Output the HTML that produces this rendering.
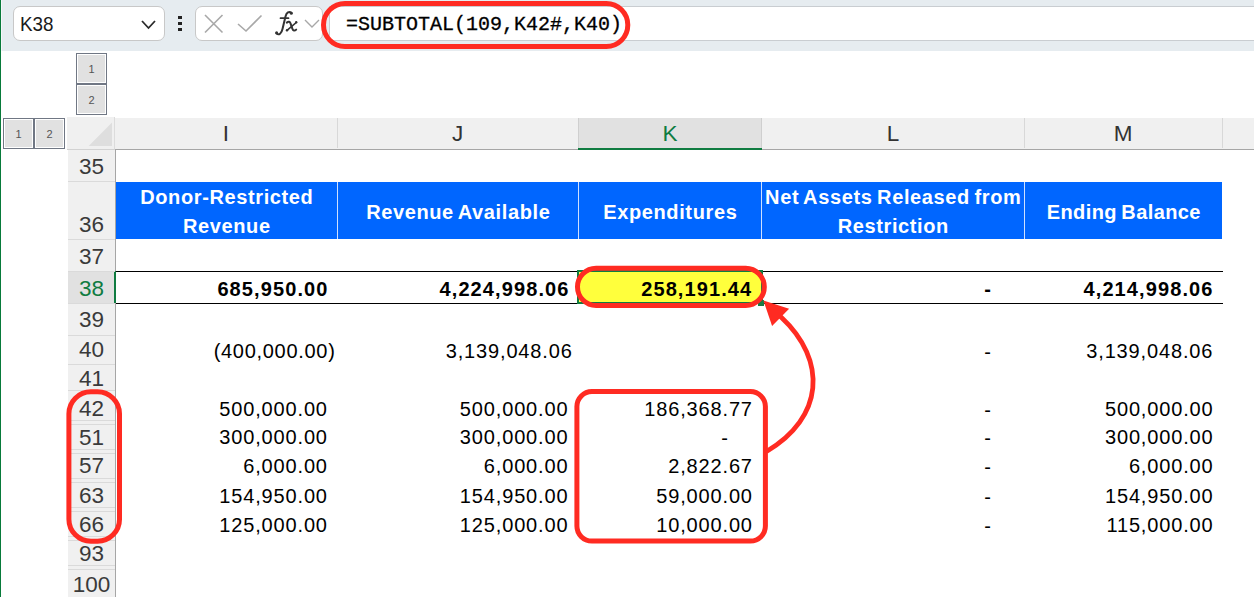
<!DOCTYPE html>
<html><head><meta charset="utf-8">
<style>
*{margin:0;padding:0;box-sizing:border-box}
html,body{width:1254px;height:597px;overflow:hidden;background:#fff;font-family:"Liberation Sans",sans-serif}
.a{position:absolute}
#top{left:0;top:0;width:1254px;height:51px;background:#E6ECF0}
.box{position:absolute;background:#fff;border:1px solid #C8C8C8;border-radius:7px}
.ob{position:absolute;width:31px;height:31px;border:1px solid #707784;background:#E1E1E1;box-shadow:inset 0 0 0 1px #fff;font-size:11px;color:#555;text-align:center;line-height:31px}
.hd{position:absolute;top:118px;height:32px;background:#F0F0F0;border-bottom:1px solid #A6A6A6;font-size:22.5px;color:#333;text-align:center;line-height:32px}
.rh{position:absolute;left:68px;width:47px;background:#F0F0F0;font-size:22px;color:#3B3B3B;text-align:center}
.t.rh{color:#3a3a3a}
.hl{position:absolute;left:68px;width:47px;height:1px;background:#DADADA}
.t{position:absolute;white-space:nowrap;font-size:20px;color:#000;line-height:20px}
.n{letter-spacing:0.85px;margin-right:-0.85px}
.nb{letter-spacing:1.1px;margin-right:-1.1px}
.b{font-weight:bold}
.w{color:#fff;font-weight:bold;letter-spacing:0.62px;word-spacing:-1.5px;text-indent:0.62px}
</style></head><body>
<div class="a" style="left:0;top:0;width:1px;height:597px;background:#087A3A;z-index:5"></div><div class="a" style="left:1px;top:0;width:1px;height:51px;background:#F6F7FA;z-index:5"></div>
<div id="top" class="a"></div>
<!-- name box -->
<div class="box" style="left:13px;top:6px;width:152px;height:35px"></div>
<div class="t" style="left:19.8px;top:14px;font-size:20px;color:#1a1a1a;transform:scaleX(0.94);transform-origin:0 0">K38</div>
<svg class="a" style="left:140px;top:18px" width="18" height="14"><polyline points="2,3 8.5,10 15,3" fill="none" stroke="#2a2a2a" stroke-width="1.8"/></svg>
<div class="a" style="left:178px;top:16px;width:4px;height:3px;background:#222"></div>
<div class="a" style="left:178px;top:22px;width:4px;height:3px;background:#222"></div>
<div class="a" style="left:178px;top:28px;width:4px;height:3px;background:#222"></div>
<!-- fx box -->
<div class="box" style="left:195px;top:6px;width:128px;height:35px"></div>
<svg class="a" style="left:200px;top:10px" width="125" height="30">
<path d="M5,5 L22.5,22.5 M22.5,5 L5,22.5" stroke="#A8A8A8" stroke-width="1.6" fill="none"/>
<path d="M38,14 L46,21 L61.5,5.5" stroke="#A8A8A8" stroke-width="1.6" fill="none"/>
<path d="M105,10 L112,17 L119,10" stroke="#A8A8A8" stroke-width="1.4" fill="none"/>
</svg>
<svg class="a" style="left:0;top:0" width="330" height="45">
<g fill="none" stroke="#333" stroke-linecap="round">
<path d="M276.5,33.5 C279,35.5 281.5,33.5 282.5,29 L285.5,16.5 C286.5,12.5 289,11 291.5,12.8" stroke-width="2"/>
<path d="M280.5,18.2 L288.5,18.2" stroke-width="1.7"/>
<path d="M286.8,22.6 C288.6,21.2 289.9,21.6 290.6,23.6 L292.4,28.8 C293,30.8 294.6,31.2 296.2,29.6" stroke-width="2"/>
<path d="M296.4,22.4 L287,30.4" stroke-width="1.5"/>
</g>
<circle cx="276.6" cy="32.8" r="1.5" fill="#333"/>
<circle cx="291.3" cy="13.3" r="1.5" fill="#333"/>
<circle cx="296.2" cy="22.3" r="1.2" fill="#333"/><circle cx="287" cy="30.3" r="1.2" fill="#333"/>
</svg>
<!-- formula box -->
<div class="a" style="left:329px;top:6px;width:940px;height:35px;background:#fff;border:1px solid #C9CDD1"></div>
<div class="t" style="left:346px;top:15.3px;font-family:'Liberation Mono',monospace;font-size:20px;color:#000;-webkit-text-stroke:0.3px #000">=SUBTOTAL(109,K42#,K40)</div>

<!-- outline buttons -->
<div class="ob" style="left:76px;top:53px">1</div>
<div class="ob" style="left:76px;top:84px">2</div>
<div class="ob" style="left:3px;top:118px">1</div>
<div class="ob" style="left:34px;top:118px">2</div>

<!-- column headers -->
<div class="a" style="left:67px;top:117px;width:48px;height:33px;background:#F0F0F0;border-bottom:1px solid #D2D2D2;border-right:1px solid #DCDCDC"></div>
<svg class="a" style="left:80px;top:115px" width="40" height="40"><polygon points="32,7.5 32,31 8.7,31" fill="#DEDEDE"/></svg>
<div class="hd" style="left:115px;width:1139px"></div>
<div class="hd" style="left:115px;width:222px">I</div>
<div class="hd" style="left:337px;width:241px">J</div>
<div class="hd" style="left:578px;width:184px;background:#E1E1E1;border-bottom:2px solid #107C41;color:#107C41">K</div>
<div class="hd" style="left:762px;width:262px">L</div>
<div class="hd" style="left:1024px;width:198px">M</div>
<div class="a" style="left:1222px;top:118px;width:1px;height:30px;background:#D8D8D8"></div>
<div class="a" style="left:337px;top:118px;width:1px;height:30px;background:#D8D8D8"></div>
<div class="a" style="left:1024px;top:118px;width:1px;height:30px;background:#D8D8D8"></div>
<div class="a" style="left:761px;top:118px;width:1px;height:30px;background:#CFCFCF"></div>
<div class="a" style="left:578px;top:118px;width:1px;height:30px;background:#CFCFCF"></div>

<!-- row header column -->
<div class="rh" style="top:150px;height:447px"></div>
<div class="a" style="left:115px;top:150px;width:1px;height:447px;background:#A6A6A6"></div>
<div class="rh" style="top:271px;height:32px;background:#E1E1E1"></div>
<div class="a" style="left:114px;top:271px;width:2px;height:32px;background:#107C41"></div>
<div class="hl" style="top:181px"></div>
<div class="hl" style="top:239px"></div>
<div class="hl" style="top:271px"></div>
<div class="hl" style="top:303px"></div>
<div class="hl" style="top:335px"></div>
<div class="hl" style="top:364px"></div>
<div class="hl" style="top:390px"></div>
<div class="hl" style="top:420px"></div><div class="hl" style="top:424px"></div>
<div class="hl" style="top:449px"></div><div class="hl" style="top:453px"></div>
<div class="hl" style="top:478px"></div><div class="hl" style="top:482px"></div>
<div class="hl" style="top:507px"></div><div class="hl" style="top:511px"></div>
<div class="hl" style="top:536px"></div><div class="hl" style="top:540px"></div>
<div class="hl" style="top:565px"></div><div class="hl" style="top:569px"></div>

<div class="t rh" style="top:156px;font-size:22.5px;line-height:22px;background:none">35</div>
<div class="t rh" style="top:214px;font-size:22.5px;line-height:22px;background:none">36</div>
<div class="t rh" style="top:245.5px;font-size:22.5px;line-height:22px;background:none">37</div>
<div class="t rh" style="top:277.5px;font-size:22.5px;line-height:22px;background:none;color:#107C41!important">38</div>
<div class="t rh" style="top:309px;font-size:22.5px;line-height:22px;background:none">39</div>
<div class="t rh" style="top:339px;font-size:22.5px;line-height:22px;background:none">40</div>
<div class="t rh" style="top:368px;font-size:22.5px;line-height:22px;background:none">41</div>
<div class="t rh" style="top:398px;font-size:22.5px;line-height:22px;background:none">42</div>
<div class="t rh" style="top:426.5px;font-size:22.5px;line-height:22px;background:none">51</div>
<div class="t rh" style="top:455px;font-size:22.5px;line-height:22px;background:none">57</div>
<div class="t rh" style="top:484.7px;font-size:22.5px;line-height:22px;background:none">63</div>
<div class="t rh" style="top:514px;font-size:22.5px;line-height:22px;background:none">66</div>
<div class="t rh" style="top:543px;font-size:22.5px;line-height:22px;background:none">93</div>
<div class="t rh" style="top:574px;font-size:22.5px;line-height:22px;background:none">100</div>

<!-- blue header row 36 -->
<div class="a" style="left:116px;top:182px;width:1106px;height:57px;background:#0066FF"></div>
<div class="a" style="left:337px;top:182px;width:1px;height:57px;background:#CFE0FF"></div>
<div class="a" style="left:578px;top:182px;width:1px;height:57px;background:#CFE0FF"></div>
<div class="a" style="left:761px;top:182px;width:1px;height:57px;background:#CFE0FF"></div>
<div class="a" style="left:1024px;top:182px;width:1px;height:57px;background:#CFE0FF"></div>

<!-- row 38 borders & selection -->
<div class="a" style="left:116px;top:271px;width:1107px;height:1px;background:#000"></div>
<div class="a" style="left:116px;top:303px;width:1107px;height:1px;background:#000"></div>
<div class="a" style="left:579px;top:272px;width:182px;height:30px;background:#FFFF3C"></div>
<div class="a" style="left:577px;top:270px;width:186px;height:34px;border:2px solid #107C41"></div>
<div class="a" style="left:758px;top:300px;width:6px;height:6px;background:#1A7A45"></div>

<!-- blue header texts -->
<div class="t w" style="left:116px;width:221px;text-align:center;top:187px">Donor-Restricted</div>
<div class="t w" style="left:116px;width:221px;text-align:center;top:216px">Revenue</div>
<div class="t w" style="left:338px;width:240px;text-align:center;top:202px">Revenue Available</div>
<div class="t w" style="left:579px;width:182px;text-align:center;top:202px">Expenditures</div>
<div class="t w" style="left:762px;width:262px;text-align:center;top:187px">Net Assets Released from</div>
<div class="t w" style="left:762px;width:262px;text-align:center;top:216px">Restriction</div>
<div class="t w" style="left:1025px;width:197px;text-align:center;top:202px;letter-spacing:0.4px">Ending Balance</div>

<!-- data cells -->
<div class="t b nb" style="right:926.6px;top:279.0px">685,950.00</div>
<div class="t b nb" style="right:685.6px;top:279.0px">4,224,998.06</div>
<div class="t b nb" style="right:502.8px;top:279.0px">258,191.44</div>
<div class="t b nb" style="right:263.2px;top:279.0px">-</div>
<div class="t b nb" style="right:41.6px;top:279.0px">4,214,998.06</div>
<div class="t n" style="right:919.2px;top:340.7px;letter-spacing:0.7px;margin-right:-0.7px">(400,000.00)</div>
<div class="t n" style="right:682.2px;top:340.7px">3,139,048.06</div>
<div class="t n" style="right:263.1px;top:341.7px">-</div>
<div class="t n" style="right:41.6px;top:340.7px">3,139,048.06</div>
<div class="t n" style="right:927.0px;top:398.5px">500,000.00</div>
<div class="t n" style="right:686.4px;top:398.5px">500,000.00</div>
<div class="t n" style="right:502.0px;top:398.5px">186,368.77</div>
<div class="t n" style="right:263.1px;top:399.5px">-</div>
<div class="t n" style="right:41.3px;top:398.5px">500,000.00</div>
<div class="t n" style="right:927.0px;top:427.3px">300,000.00</div>
<div class="t n" style="right:686.4px;top:427.3px">300,000.00</div>
<div class="t n" style="right:526.2px;top:428.3px">-</div>
<div class="t n" style="right:263.1px;top:428.3px">-</div>
<div class="t n" style="right:41.3px;top:427.3px">300,000.00</div>
<div class="t n" style="right:927.0px;top:456.0px">6,000.00</div>
<div class="t n" style="right:686.4px;top:456.0px">6,000.00</div>
<div class="t n" style="right:502.0px;top:456.0px">2,822.67</div>
<div class="t n" style="right:263.1px;top:457.0px">-</div>
<div class="t n" style="right:41.3px;top:456.0px">6,000.00</div>
<div class="t n" style="right:927.0px;top:485.5px">154,950.00</div>
<div class="t n" style="right:686.4px;top:485.5px">154,950.00</div>
<div class="t n" style="right:502.0px;top:485.5px">59,000.00</div>
<div class="t n" style="right:263.1px;top:486.5px">-</div>
<div class="t n" style="right:41.3px;top:485.5px">154,950.00</div>
<div class="t n" style="right:927.0px;top:515.0px">125,000.00</div>
<div class="t n" style="right:686.4px;top:515.0px">125,000.00</div>
<div class="t n" style="right:502.0px;top:515.0px">10,000.00</div>
<div class="t n" style="right:263.1px;top:516.0px">-</div>
<div class="t n" style="right:41.3px;top:515.0px">115,000.00</div>

<!-- annotations -->
<svg class="a" style="left:0;top:0;z-index:10" width="1254" height="597">
<g fill="none" stroke="#FF2B22" stroke-width="5">
<rect x="323.5" y="3.5" width="304.3" height="43" rx="21.5"/>
<rect x="577.5" y="268.2" width="186.8" height="37.3" rx="18.6"/>
<rect x="68.9" y="391.7" width="50.6" height="149.5" rx="22"/>
<rect x="576.9" y="391.6" width="188.5" height="149.5" rx="15"/>
<path d="M766.5,451.5 C823.6,417.9 828,360.7 781,317 L777,313" stroke-width="4.8"/>
</g>
<polygon points="763.4,300.4 772.1,326.1 789.1,308.7" fill="#FF2B22"/>
</svg>
</body></html>
